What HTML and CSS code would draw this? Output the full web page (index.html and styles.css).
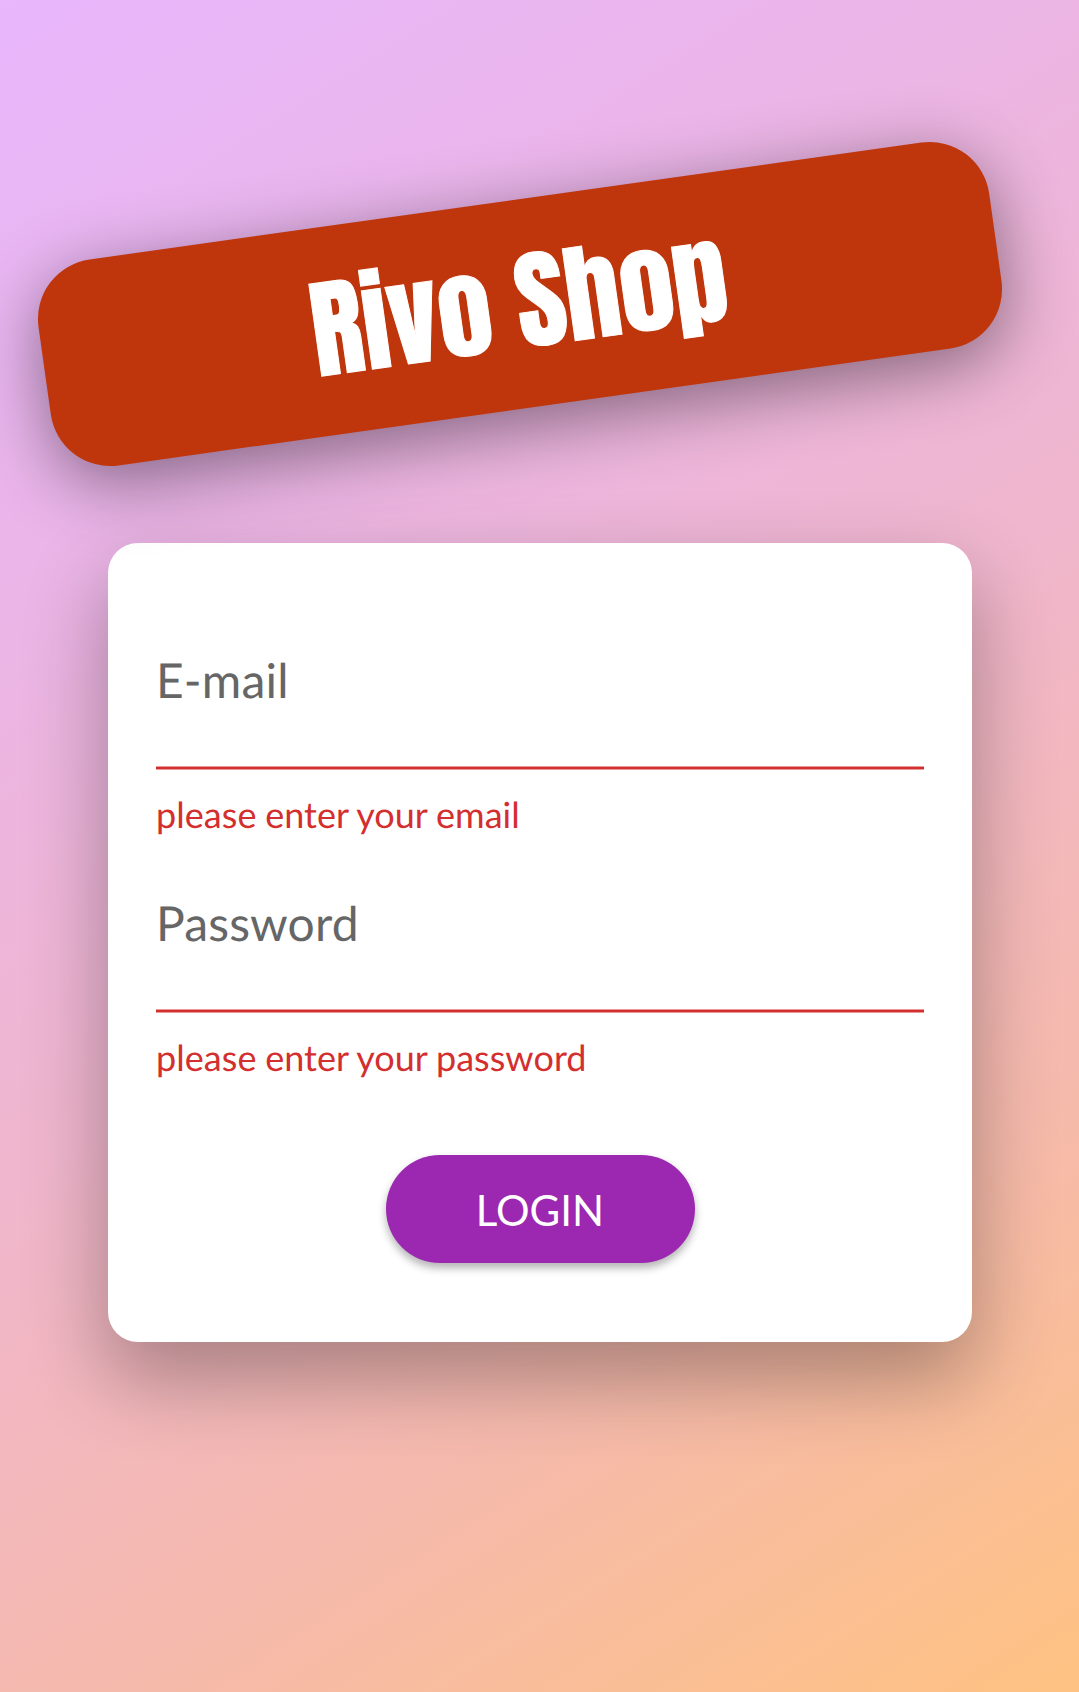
FILE: index.html
```
<!DOCTYPE html>
<html lang="en">
<head>
<meta charset="utf-8">
<title>Rivo Shop</title>
<link rel="stylesheet" href="styles.css">
</head>
<body>
<main class="auth">
  <h1 class="banner"><span class="banner-title">Rivo Shop</span></h1>
  <form class="card">
    <div class="field">
      <label class="label">E-mail</label>
      <div class="underline"></div>
      <p class="error">please enter your email</p>
    </div>
    <div class="field">
      <label class="label">Password</label>
      <div class="underline"></div>
      <p class="error">please enter your password</p>
    </div>
    <button class="login" type="button">LOGIN</button>
  </form>
</main>
</body>
</html>
```
FILE: styles.css
```
* { box-sizing: border-box; }

body {
  margin: 0;
  font-family: Lato, "Open Sans", sans-serif;
  text-rendering: geometricPrecision;
}

.auth {
  display: flex;
  flex-direction: column;
  align-items: center;
  height: 1692px;
  padding-top: 200px;
  overflow: hidden;
  background: linear-gradient(147.47deg, #e8b7fc 0%, #ebb5e8 25%, #f0b6cd 50%, #f6baab 75%, #fec282 100%);
}

.banner {
  display: flex;
  align-items: center;
  justify-content: center;
  flex: none;
  width: 960px;
  height: 208px;
  margin: 0 39px 135px 0;
  padding: 0 2px 3px 0;
  border-radius: 60px;
  background: #bf360c;
  box-shadow: 0 17px 68px 1px rgba(0, 0, 0, 0.43);
  transform: rotate(-8deg);
}

.banner-title {
  color: #fff;
  font-family: Anton, "Open Sans", sans-serif;
  font-size: 108px;
  font-weight: 400;
  line-height: 160px;
  white-space: nowrap;
  -webkit-text-stroke: 1px #fff;
}

.card {
  display: flex;
  flex-direction: column;
  flex: none;
  width: 864px;
  height: 799px;
  padding: 109px 48px 0;
  border-radius: 30px;
  background: #fff;
  box-shadow: 0 36px 80px 3px rgba(0, 0, 0, 0.3);
}

.field {
  display: flex;
  flex-direction: column;
  height: 243px;
}

.label {
  margin-bottom: 56px;
  padding-left: 0.5px;
  color: #666;
  font-size: 48px;
  letter-spacing: 0.15px;
  line-height: 58px;
}

.underline {
  height: 4px;
  margin-bottom: 21.5px;
  background: #d32f2f;
  border: solid #e99797;
  border-width: 1px 0;
}

.error {
  margin: 0;
  padding-left: 0.5px;
  color: #d32f2f;
  font-size: 36px;
  letter-spacing: 0.05px;
  line-height: 44px;
  word-spacing: -0.6px;
}

.login {
  align-self: center;
  width: 309px;
  height: 108px;
  margin: 17px 0 0 1px;
  padding: 2px 0 0;
  border: 0;
  border-radius: 54px;
  background: #9c27b0;
  box-shadow: 0 5px 9px rgba(0, 0, 0, 0.3);
  color: #fff;
  font-family: inherit;
  font-size: 42px;
  line-height: 50px;
}
```
